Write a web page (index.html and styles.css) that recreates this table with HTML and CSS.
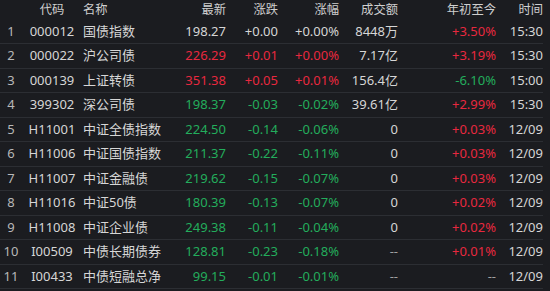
FILE: index.html
```html
<!DOCTYPE html>
<html lang="zh-CN">
<head>
<meta charset="utf-8">
<title>债券指数</title>
<link rel="stylesheet" href="styles.css">
</head>
<body>
<div class="board">
  <div class="row head">
    <span class="c-idx"></span>
    <span class="c-code">代码</span>
    <span class="c-name">名称</span>
    <span class="c-num">最新</span>
    <span class="c-num">涨跌</span>
    <span class="c-num">涨幅</span>
    <span class="c-num">成交额</span>
    <span class="c-num">年初至今</span>
    <span class="c-num">时间</span>
  </div>
  <div class="row">
    <span class="c-idx">1</span><span class="c-code">000012</span><span class="c-name">国债指数</span>
    <span class="c-num">198.27</span><span class="c-num">+0.00</span><span class="c-num">+0.00%</span>
    <span class="c-num">8448万</span><span class="c-num up">+3.50%</span><span class="c-num">15:30</span>
  </div>
  <div class="row">
    <span class="c-idx">2</span><span class="c-code">000022</span><span class="c-name">沪公司债</span>
    <span class="c-num up">226.29</span><span class="c-num up">+0.01</span><span class="c-num up">+0.00%</span>
    <span class="c-num">7.17亿</span><span class="c-num up">+3.19%</span><span class="c-num">15:30</span>
  </div>
  <div class="row">
    <span class="c-idx">3</span><span class="c-code">000139</span><span class="c-name">上证转债</span>
    <span class="c-num up">351.38</span><span class="c-num up">+0.05</span><span class="c-num up">+0.01%</span>
    <span class="c-num">156.4亿</span><span class="c-num down">-6.10%</span><span class="c-num">15:00</span>
  </div>
  <div class="row">
    <span class="c-idx">4</span><span class="c-code">399302</span><span class="c-name">深公司债</span>
    <span class="c-num down">198.37</span><span class="c-num down">-0.03</span><span class="c-num down">-0.02%</span>
    <span class="c-num">39.61亿</span><span class="c-num up">+2.99%</span><span class="c-num">15:30</span>
  </div>
  <div class="row">
    <span class="c-idx">5</span><span class="c-code">H11001</span><span class="c-name">中证全债指数</span>
    <span class="c-num down">224.50</span><span class="c-num down">-0.14</span><span class="c-num down">-0.06%</span>
    <span class="c-num">0</span><span class="c-num up">+0.03%</span><span class="c-num">12/09</span>
  </div>
  <div class="row">
    <span class="c-idx">6</span><span class="c-code">H11006</span><span class="c-name">中证国债指数</span>
    <span class="c-num down">211.37</span><span class="c-num down">-0.22</span><span class="c-num down">-0.11%</span>
    <span class="c-num">0</span><span class="c-num up">+0.03%</span><span class="c-num">12/09</span>
  </div>
  <div class="row">
    <span class="c-idx">7</span><span class="c-code">H11007</span><span class="c-name">中证金融债</span>
    <span class="c-num down">219.62</span><span class="c-num down">-0.15</span><span class="c-num down">-0.07%</span>
    <span class="c-num">0</span><span class="c-num up">+0.03%</span><span class="c-num">12/09</span>
  </div>
  <div class="row">
    <span class="c-idx">8</span><span class="c-code">H11016</span><span class="c-name">中证50债</span>
    <span class="c-num down">180.39</span><span class="c-num down">-0.13</span><span class="c-num down">-0.07%</span>
    <span class="c-num">0</span><span class="c-num up">+0.02%</span><span class="c-num">12/09</span>
  </div>
  <div class="row">
    <span class="c-idx">9</span><span class="c-code">H11008</span><span class="c-name">中证企业债</span>
    <span class="c-num down">249.38</span><span class="c-num down">-0.11</span><span class="c-num down">-0.04%</span>
    <span class="c-num">0</span><span class="c-num up">+0.02%</span><span class="c-num">12/09</span>
  </div>
  <div class="row">
    <span class="c-idx">10</span><span class="c-code">I00509</span><span class="c-name">中债长期债券</span>
    <span class="c-num down">128.81</span><span class="c-num down">-0.23</span><span class="c-num down">-0.18%</span>
    <span class="c-num dim">--</span><span class="c-num up">+0.01%</span><span class="c-num">12/09</span>
  </div>
  <div class="row">
    <span class="c-idx">11</span><span class="c-code">I00433</span><span class="c-name">中债短融总净</span>
    <span class="c-num down">99.15</span><span class="c-num down">-0.01</span><span class="c-num down">-0.01%</span>
    <span class="c-num dim">--</span><span class="c-num dim">--</span><span class="c-num">12/09</span>
  </div>
</div>
</body>
</html>
```

FILE: styles.css
```css
html, body {
  margin: 0;
  padding: 0;
  background: #1b1c20;
  overflow: hidden;
}

.board {
  width: 550px;
  padding-right: 7px;
  box-sizing: border-box;
  font-family: "Noto Sans", "Noto Sans CJK SC", sans-serif;
  font-size: 13px;
  color: #d6d6d6;
}

.row {
  display: grid;
  grid-template-columns: 22px 60px 88px 56px 52px 61px 59px 98px 47px;
  align-items: center;
  height: 24.5px;
  box-sizing: border-box;
  border-bottom: 1px solid #2c2e33;
  line-height: 1;
  white-space: nowrap;
}

.row.head {
  height: 19.5px;
  border-bottom: none;
  font-size: 12.3px;
  color: #cfcfcf;
}

.c-idx {
  text-align: center;
  color: #b8b8b8;
}

.c-code {
  text-align: center;
}

.c-name {
  padding-left: 1px;
}

.c-num {
  text-align: right;
}

.up {
  color: #e8283f;
}

.down {
  color: #23ad5c;
}

.dim {
  color: #a0a0a0;
}
```
